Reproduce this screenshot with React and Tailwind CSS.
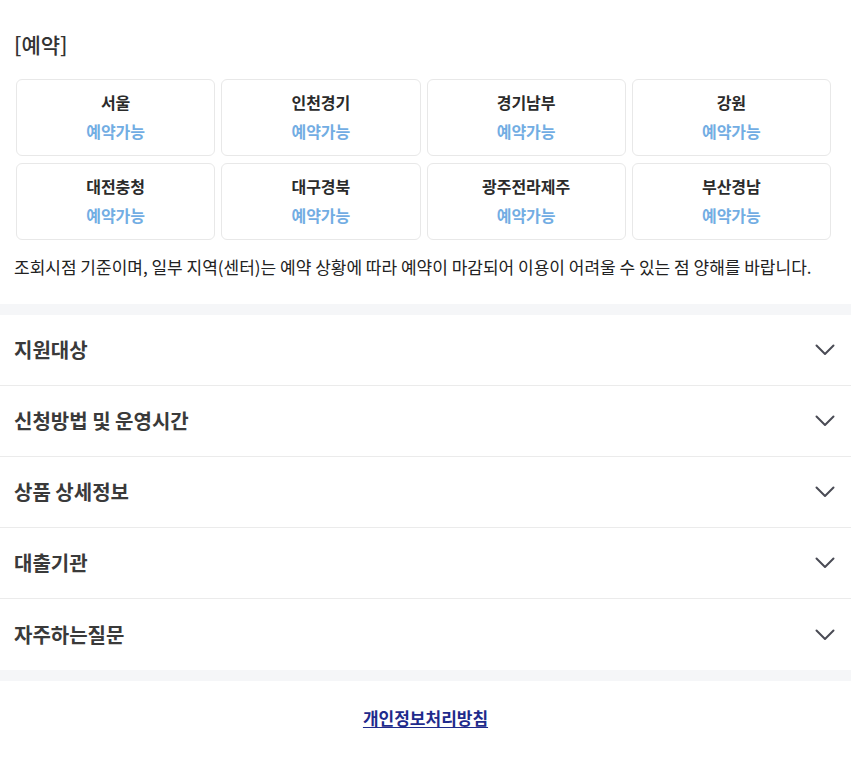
import React from 'react';

const regions = ['서울', '인천경기', '경기남부', '강원', '대전충청', '대구경북', '광주전라제주', '부산경남'];
const sections = ['지원대상', '신청방법 및 운영시간', '상품 상세정보', '대출기관', '자주하는질문'];

const Chevron = () => (
  <svg width="20" height="12" viewBox="0 0 20 12" fill="none" className="text-[#4a4b55]">
    <path d="M1.5 1.5 L10 10 L18.5 1.5" stroke="currentColor" strokeWidth="2" strokeLinecap="round" strokeLinejoin="round" />
  </svg>
);

const App = () => {
  return (
    <div className="min-h-[760px] w-full bg-white font-['Noto_Sans_CJK_KR','Noto_Sans',sans-serif] text-[#222]">
      <section className="px-[14px] pt-[30px] pb-[26px]">
        <h2 className="text-[21px] leading-[28px] font-medium text-[#333]">[예약]</h2>

        <div className="mt-[21px] ml-[2px] mr-[6px] grid grid-cols-4 gap-x-[6px] gap-y-[7px]">
          {regions.map((name) => (
            <div
              key={name}
              className="flex flex-col items-center gap-[7px] rounded-[6px] border border-[#e8e8e8] pt-[11px] pb-[13px] text-[16px] leading-[22px]"
            >
              <span className="font-bold text-[#2b2b2b]">{name}</span>
              <span className="font-bold text-[#72ade3]">예약가능</span>
            </div>
          ))}
        </div>

        <p className="mt-4 text-[17px] leading-[22px] text-[#222]">
          조회시점 기준이며, 일부 지역(센터)는 예약 상황에 따라 예약이 마감되어 이용이 어려울 수 있는 점 양해를 바랍니다.
        </p>
      </section>

      <div className="h-[11px] bg-[#f5f6f8]" />

      <div>
        {sections.map((title, index) => (
          <button
            key={title}
            className={`flex h-[71px] w-full items-center justify-between pl-[14px] pr-[16px] text-left ${
              index < sections.length - 1 ? 'border-b border-[#ebebeb]' : ''
            }`}
          >
            <span className="text-[20px] font-bold text-[#3a3a3a]">{title}</span>
            <Chevron />
          </button>
        ))}
      </div>

      <div className="h-[11px] bg-[#f5f6f8]" />

      <footer className="flex justify-center pt-[26px]">
        <a href="#" className="text-[17px] leading-[22px] font-bold text-[#1f2b8c] underline underline-offset-2">
          개인정보처리방침
        </a>
      </footer>
    </div>
  );
};

export default App;
